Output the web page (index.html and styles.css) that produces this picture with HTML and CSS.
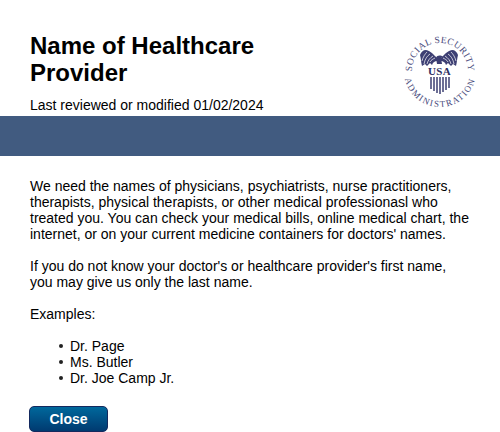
FILE: index.html
```html
<!DOCTYPE html>
<html lang="en">
  <head>
    <meta charset="UTF-8" />
    <title>Name of Healthcare Provider</title>
    <link rel="stylesheet" href="styles.css">
  </head>
  <body>
    <div class="header">
      <div>
        <h1>Name of Healthcare Provider</h1>
        <p class="reviewed">Last reviewed or modified 01/02/2024</p>
      </div>
      <svg class="logo" viewBox="0 0 80 80" width="80" height="80" aria-label="Social Security Administration">
        <defs>
          <path id="arcTop" d="M13.2 48 A28 28 0 1 1 66.8 48" />
          <path id="arcBottom" d="M4 40 A36 36 0 0 0 76 40" />
        </defs>
        <text class="logo-text"><textPath href="#arcTop" startOffset="50%" text-anchor="middle">SOCIAL SECURITY</textPath></text>
        <text class="logo-text logo-text-low"><textPath href="#arcBottom" startOffset="50%" text-anchor="middle">ADMINISTRATION</textPath></text>
        <!-- eagle wings -->
        <path class="wing" d="M37 27 C34 24 31 20 26 19 C23 19 21 21 20 24 C21 28 21 31 22 35 L25 33 L27 35 L30 32 L32 34 C33 31 35 30 37 30 Z" />
        <path class="wing" d="M41 27 C44 24 47 20 52 19 C55 19 57 21 58 24 C57 28 57 31 56 35 L53 33 L51 35 L48 32 L46 34 C45 31 43 30 41 30 Z" />
        <path class="feather" d="M22 30 C23 26 25 23 27 21 M24 33 C25 28 27 25 30 23 M27 33 C28 29 30 27 33 25 M30 31 C31 29 33 28 35 27 M56 30 C55 26 53 23 51 21 M54 33 C53 28 51 25 48 23 M51 33 C50 29 48 27 45 25 M48 31 C47 29 45 28 43 27" />
        <path class="wing" d="M36 27 C37 24 41 24 43 26 L41 27 L42 33 L37 33 Z" />
        <text class="usa" x="39.5" y="44" text-anchor="middle">USA</text>
        <!-- shield stripes -->
        <path class="stripes" d="M31 46 V58 M34 46 V60 M37 46 V62 M40 46 V63 M43 46 V61 M46 46 V59 M49 46 V57" />
      </svg>
    </div>
    <div class="band"></div>
    <div class="content">
      <p>We need the names of physicians, psychiatrists, nurse practitioners, therapists, physical therapists, or other medical professionasl who treated you. You can check your medical bills, online medical chart, the internet, or on your current medicine containers for doctors' names.</p>
      <p>If you do not know your doctor's or healthcare provider's first name, you may give us only the last name.</p>
      <p>Examples:</p>
      <ul>
        <li>Dr. Page</li>
        <li>Ms. Butler</li>
        <li>Dr. Joe Camp Jr.</li>
      </ul>
      <button class="close">Close</button>
    </div>
  </body>
</html>
```

FILE: styles.css
```css
html {
  overflow: hidden;
}
body {
  font-family: 'Liberation Sans', Arial, sans-serif;
  font-size: 14px;
  line-height: 16px;
  margin: 0;
  color: #000;
  background-color: white;
}
.header {
  display: flex;
  justify-content: space-between;
  align-items: flex-start;
  height: 116px;
  box-sizing: border-box;
  padding: 32px 20px 0 30px;
}
h1 {
  font-size: 24px;
  line-height: 27px;
  width: 300px;
  margin: 0;
}
.reviewed {
  margin: 11px 0 0;
}
.logo {
  margin-top: -1px;
  overflow: visible;
}
.logo-text {
  font-family: 'Liberation Serif', serif;
  font-size: 9.5px;
  letter-spacing: 0.4px;
  fill: #4a4b7c;
}
.logo-text-low {
  font-size: 9px;
  letter-spacing: 1.4px;
}
.wing {
  fill: #3d3f73;
}
.feather {
  stroke: white;
  stroke-width: 0.7;
  fill: none;
}
.usa {
  font-family: 'Liberation Serif', serif;
  font-size: 11px;
  font-weight: bold;
  letter-spacing: 0.3px;
  fill: #2e2f63;
}
.stripes {
  stroke: #3d3f73;
  stroke-width: 1.5;
  fill: none;
}
.band {
  height: 40px;
  background-color: #415b80;
}
.content {
  padding: 22px 30px 0;
}
.content p {
  margin: 0 0 16px;
}
ul {
  list-style: none;
  margin: 0 0 20px;
  padding: 0 0 0 40px;
}
li {
  position: relative;
}
li::before {
  content: "";
  position: absolute;
  left: -11px;
  top: 6px;
  width: 4px;
  height: 4px;
  border-radius: 50%;
  background-color: #222;
}
.close {
  display: block;
  width: 79px;
  height: 26px;
  margin-left: -1px;
  padding: 0;
  border: 1px solid #14295e;
  border-radius: 5px;
  background: linear-gradient(#00689c, #003a70);
  color: white;
  font-family: 'Liberation Sans', Arial, sans-serif;
  font-size: 14px;
  font-weight: bold;
}
```
